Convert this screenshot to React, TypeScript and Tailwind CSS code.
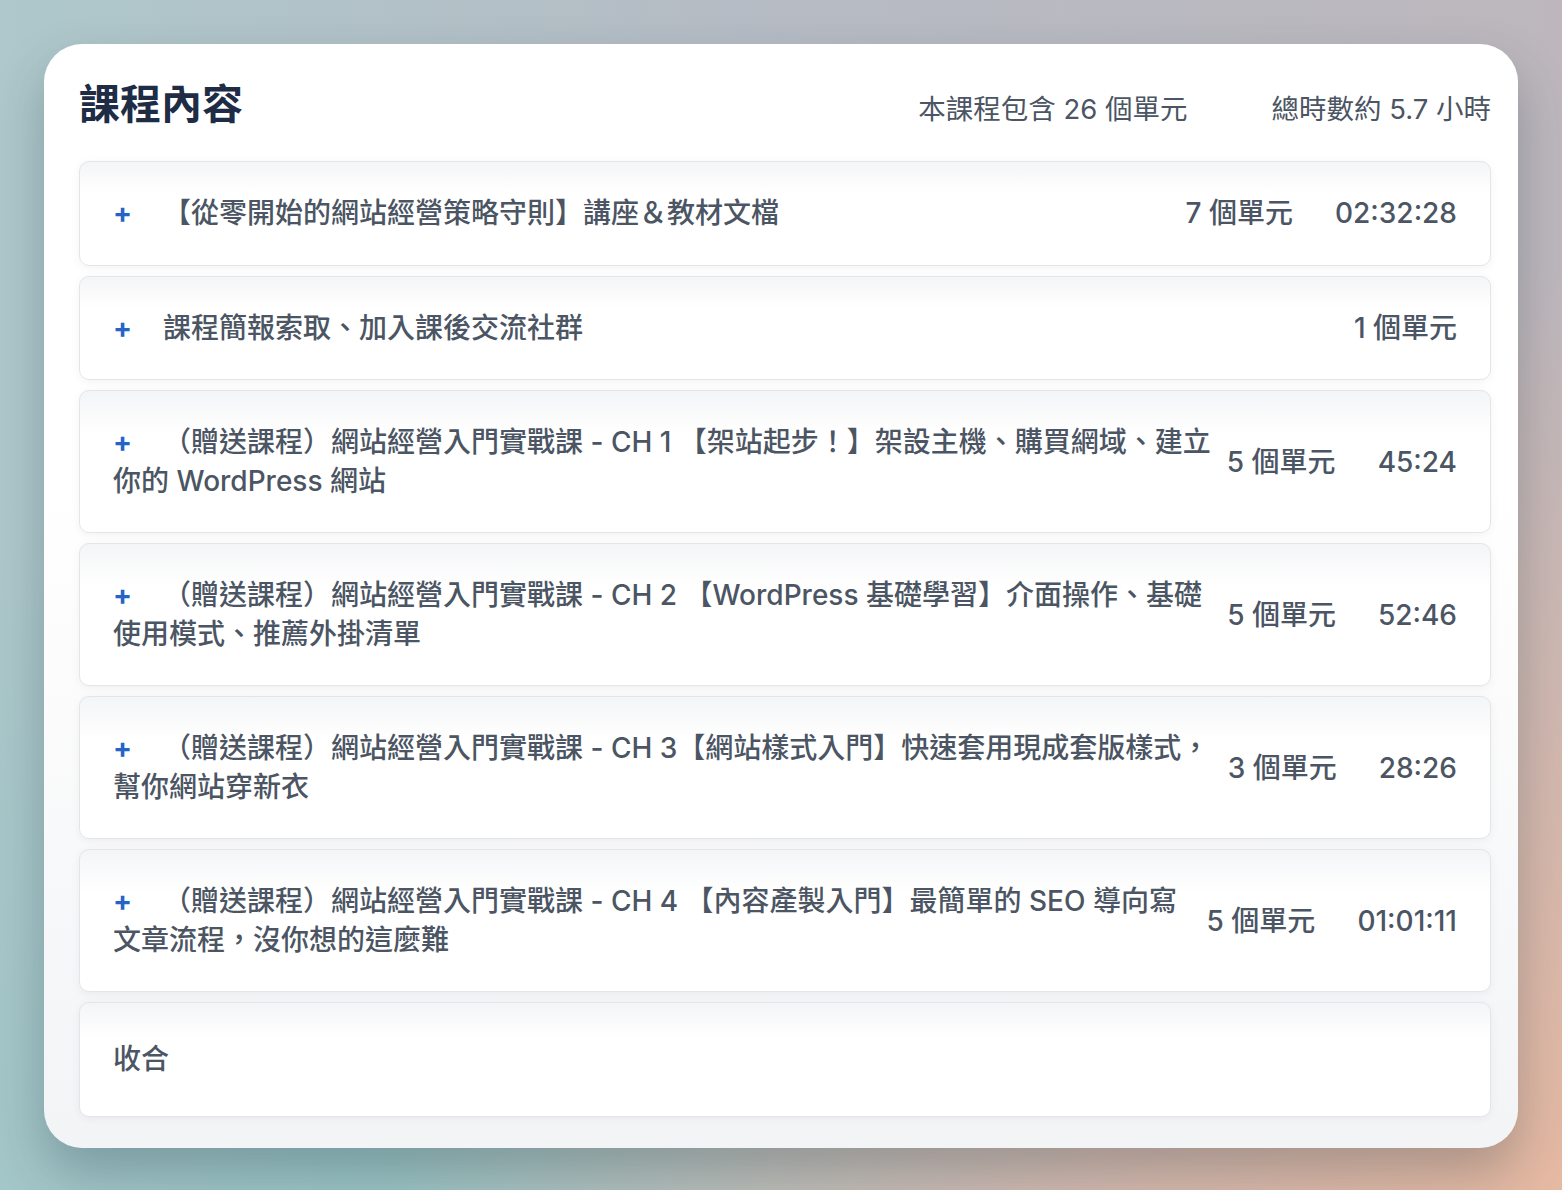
import React from "react";

type Section = {
  title: string;
  units: string;
  duration?: string;
};

const sections: Section[] = [
  { title: "【從零開始的網站經營策略守則】講座＆教材文檔", units: "7 個單元", duration: "02:32:28" },
  { title: "課程簡報索取、加入課後交流社群", units: "1 個單元" },
  {
    title: "（贈送課程）網站經營入門實戰課 - CH 1 【架站起步！】架設主機、購買網域、建立你的 WordPress 網站",
    units: "5 個單元",
    duration: "45:24",
  },
  {
    title: "（贈送課程）網站經營入門實戰課 - CH 2 【WordPress 基礎學習】介面操作、基礎使用模式、推薦外掛清單",
    units: "5 個單元",
    duration: "52:46",
  },
  {
    title: "（贈送課程）網站經營入門實戰課 - CH 3【網站樣式入門】快速套用現成套版樣式，幫你網站穿新衣",
    units: "3 個單元",
    duration: "28:26",
  },
  {
    title: "（贈送課程）網站經營入門實戰課 - CH 4 【內容產製入門】最簡單的 SEO 導向寫文章流程，沒你想的這麼難",
    units: "5 個單元",
    duration: "01:01:11",
  },
];

const font = "font-['Inter','Noto_Sans_CJK_TC',sans-serif]";

function SectionRow({ section }: { section: Section }) {
  return (
    <div className="flex items-center gap-4 rounded-[10px] border border-[#e3e5e9] bg-[linear-gradient(to_bottom,#f4f5f7,#ffffff_30%)] py-[32px] pl-[33px] pr-[33px] shadow-[0_2px_10px_rgba(15,23,42,0.05)]">
      <p className="flex-1 text-[28px] leading-[38.5px] font-medium text-[#4b5563]">
        <span className="inline-block w-[50px] font-bold text-[#2563c9]">+</span>
        {section.title}
      </p>
      <div className="flex shrink-0 items-center gap-[42px] text-[28px] leading-[38.5px] font-medium text-[#4b5563]">
        <span>{section.units}</span>
        {section.duration && <span>{section.duration}</span>}
      </div>
    </div>
  );
}

export default function App() {
  return (
    <div
      className={`${font} min-h-[1190px] w-full bg-[radial-gradient(ellipse_at_100%_100%,#e6b9a2_0%,transparent_55%),radial-gradient(ellipse_at_25%_100%,#98c4c5_0%,transparent_45%),linear-gradient(to_right,#aec8cb,#b6bbc4_50%,#bdb7bd)] px-[44px] pt-[44px] pb-[44px]`}
    >
      <div className="flex flex-col rounded-[38px] bg-[linear-gradient(to_bottom,#ffffff,#ffffff_40%,#f3f4f6)] pl-[35px] pr-[27px] pt-[34px] pb-[31px] shadow-[0_24px_50px_rgba(30,50,60,0.28)]">
        <div className="mb-[31px] flex items-baseline justify-between">
          <h1 className="text-[41px] leading-[52px] font-bold text-[#1e2c46]">課程內容</h1>
          <div className="flex items-baseline gap-[84px] text-[27.5px] text-[#4b5563]">
            <span>本課程包含 26 個單元</span>
            <span>總時數約 5.7 小時</span>
          </div>
        </div>
        <div className="flex flex-col gap-[10px]">
          {sections.map((s) => (
            <SectionRow key={s.title} section={s} />
          ))}
          <div className="rounded-[10px] border border-[#e3e5e9] bg-[linear-gradient(to_bottom,#f4f5f7,#ffffff_30%)] py-[37px] px-[33px] shadow-[0_2px_10px_rgba(15,23,42,0.05)]">
            <p className="text-[28px] leading-[38.5px] font-medium text-[#4b5563]">收合</p>
          </div>
        </div>
      </div>
    </div>
  );
}
